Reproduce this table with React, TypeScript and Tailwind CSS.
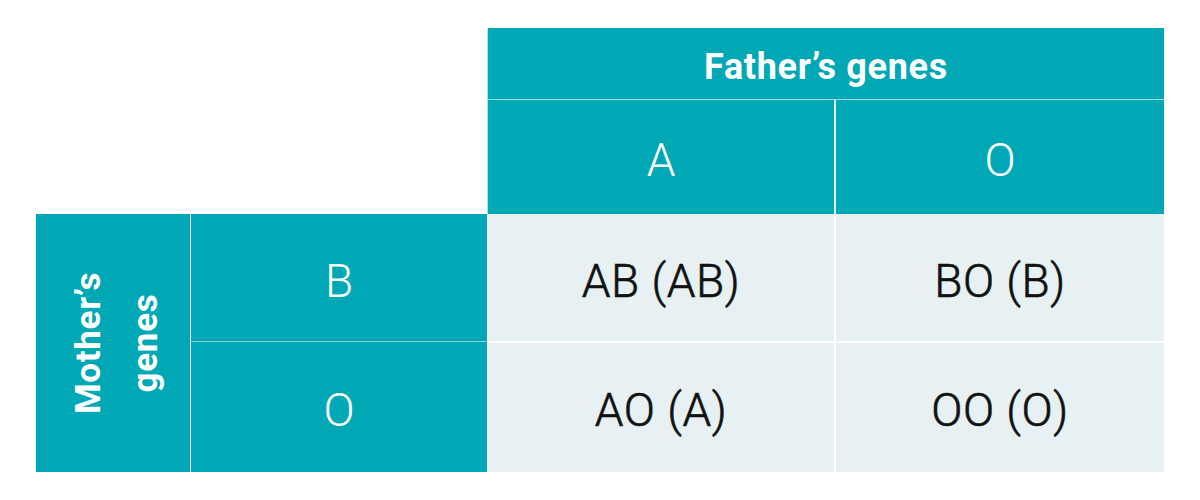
const teal = "bg-[#00a8b5]";

export default function App() {
  return (
    <div className="w-[1200px] h-[500px] bg-white pt-[28px] pl-[36px] font-['Roboto',sans-serif]">
      <div className="grid grid-cols-[154px_297px_347px_330px] grid-rows-[72px_114px_127px_131px]">
        {/* top-left blank */}
        <div className="col-span-2 row-span-2" />

        <div className={`col-span-2 ${teal} border-l border-white/70 border-b border-b-white/60 flex items-center justify-center text-white text-[36px] font-bold tracking-[0.7px] pt-[6px]`}>
          Father’s genes
        </div>

        <div className={`${teal} border-l border-white/70 flex items-center justify-center text-white text-[46px] font-light pt-[6px]`}>
          A
        </div>
        <div className={`${teal} border-l-2 border-white/90 flex items-center justify-center text-white text-[46px] font-light pt-[6px]`}>
          O
        </div>

        {/* mother's side */}
        <div className={`row-span-2 ${teal} flex items-center justify-center`}>
          <div className="-rotate-90 text-white text-[35px] font-bold leading-[57px] text-center whitespace-nowrap tracking-[0.7px] ml-[8px]">
            Mother’s
            <br />
            genes
          </div>
        </div>

        <div className={`${teal} border-l border-white flex items-center justify-center text-white text-[46px] font-light pt-[8px]`}>
          B
        </div>
        <div className="bg-[#e7f0f3] border-l border-white flex items-center justify-center text-[#111] text-[46px] font-light tracking-[0.5px] [-webkit-text-stroke:0.6px_#111] pt-[8px]">
          AB (AB)
        </div>
        <div className="bg-[#e7f0f3] border-l-2 border-white flex items-center justify-center text-[#111] text-[46px] font-light tracking-[0.5px] [-webkit-text-stroke:0.6px_#111] pt-[8px]">
          BO (B)
        </div>

        <div className={`${teal} border-l border-white border-t border-t-white/50 flex items-center justify-center text-white text-[46px] font-light pt-[6px]`}>
          O
        </div>
        <div className="bg-[#e7f0f3] border-l border-white border-t-2 border-t-white flex items-center justify-center text-[#111] text-[46px] font-light tracking-[0.5px] [-webkit-text-stroke:0.6px_#111] pt-[6px]">
          AO (A)
        </div>
        <div className="bg-[#e7f0f3] border-l-2 border-white border-t-2 border-t-white flex items-center justify-center text-[#111] text-[46px] font-light tracking-[0.5px] [-webkit-text-stroke:0.6px_#111] pt-[6px]">
          OO (O)
        </div>
      </div>
    </div>
  );
}
